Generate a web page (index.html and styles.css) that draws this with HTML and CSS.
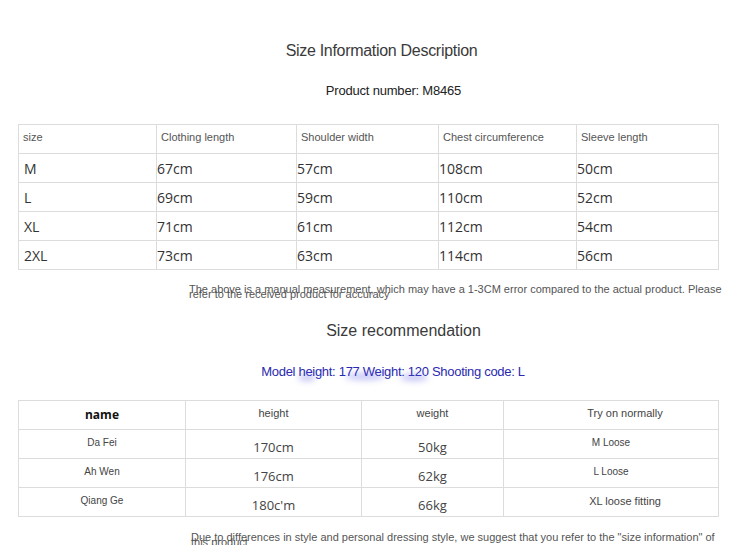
FILE: index.html
```html
<!DOCTYPE html>
<html>
<head>
<meta charset="utf-8">
<link rel="stylesheet" href="styles.css">
</head>
<body>
<div class="page">
  <h1 class="title title-top">Size Information Description</h1>
  <p class="product">Product number: M8465</p>

  <table class="size-table">
    <colgroup>
      <col style="width:138px"><col style="width:140px"><col style="width:142px"><col style="width:138px"><col style="width:142px">
    </colgroup>
    <tr class="head">
      <td>size</td><td>Clothing length</td><td>Shoulder width</td><td>Chest circumference</td><td>Sleeve length</td>
    </tr>
    <tr><td>M</td><td>67cm</td><td>57cm</td><td>108cm</td><td>50cm</td></tr>
    <tr><td>L</td><td>69cm</td><td>59cm</td><td>110cm</td><td>52cm</td></tr>
    <tr><td>XL</td><td>71cm</td><td>61cm</td><td>112cm</td><td>54cm</td></tr>
    <tr><td>2XL</td><td>73cm</td><td>63cm</td><td>114cm</td><td>56cm</td></tr>
  </table>

  <p class="note note-top">The above is a manual measurement, which may have a 1-3CM error compared to the actual product. Please refer to the received product for accuracy</p>

  <h2 class="title title-rec">Size recommendation</h2>
  <p class="model">Model height: 177 Weight: 120 Shooting code: L<span class="smudge s1"></span><span class="smudge s2"></span><span class="smudge s3"></span></p>

  <table class="rec-table">
    <colgroup>
      <col style="width:167px"><col style="width:176px"><col style="width:142px"><col style="width:215px">
    </colgroup>
    <tr class="head">
      <td class="name-head">name</td><td>height</td><td>weight</td><td class="shift">Try on normally</td>
    </tr>
    <tr><td class="lbl">Da Fei</td><td class="val">170cm</td><td class="val">50kg</td><td class="lbl">M Loose</td></tr>
    <tr><td class="lbl">Ah Wen</td><td class="val">176cm</td><td class="val">62kg</td><td class="lbl">L Loose</td></tr>
    <tr><td class="lbl">Qiang Ge</td><td class="val">180c'm</td><td class="val">66kg</td><td class="lbl shift">XL loose fitting</td></tr>
  </table>

  <p class="note note-bottom">Due to differences in style and personal dressing style, we suggest that you refer to the "size information" of this product</p>
</div>
</body>
</html>
```

FILE: styles.css
```css
html, body {
  margin: 0;
  padding: 0;
  background: #ffffff;
}

.page {
  width: 729px;
  font-family: "Liberation Sans", Arial, sans-serif;
  color: #333333;
}

.title {
  margin: 0;
  font-weight: normal;
  text-align: center;
  font-size: 16px;
  line-height: 18px;
  color: #3a3a3a;
  letter-spacing: -0.3px;
}

.title-top {
  padding-top: 42px;
  padding-left: 34px;
}

.product {
  margin: 23px 0 0 0;
  text-align: center;
  font-size: 13px;
  line-height: 16px;
  padding-left: 58px;
  color: #222222;
  letter-spacing: -0.2px;
}

table {
  border-collapse: collapse;
  table-layout: fixed;
  margin-left: 18px;
}

td {
  border: 1px solid #dcdcdc;
  padding: 0;
}

.size-table {
  width: 700px;
  margin-top: 25px;
}

.size-table tr {
  height: 29px;
}

.size-table td {
  font-family: "Open Sans", "Noto Sans", sans-serif;
  font-size: 14px;
  color: #333333;
  padding-left: 0;
  vertical-align: middle;
}

.size-table td:first-child {
  padding-left: 5px;
}

.size-table .head td {
  font-family: "Liberation Sans", Arial, sans-serif;
  font-size: 11px;
  color: #555555;
  vertical-align: top;
  padding-top: 6px;
  padding-left: 4px;
}

.note {
  margin: 0;
  font-size: 11px;
  line-height: 5px;
  color: #555555;
  padding-left: 189px;
  padding-right: 5px;
}

.note-top {
  margin-top: 17px;
}

.title-rec {
  margin-top: 25px;
  padding-left: 78px;
  letter-spacing: 0;
}

.model {
  position: relative;
  margin: 24px 0 0 0;
  text-align: center;
  font-size: 13px;
  line-height: 16px;
  color: #2a2ab0;
  padding-left: 57px;
  letter-spacing: -0.3px;
}

.smudge {
  position: absolute;
  height: 7px;
  border-radius: 50%;
  background: rgba(90, 90, 230, 0.35);
  filter: blur(3px);
}

.s1 { left: 298px; top: 10px; width: 18px; }
.s2 { left: 345px; top: 9px; width: 40px; }
.s3 { left: 400px; top: 10px; width: 28px; }

.rec-table {
  width: 700px;
  margin-top: 20px;
}

.rec-table tr {
  height: 29px;
}

.rec-table td {
  text-align: center;
  vertical-align: top;
  font-size: 10px;
  color: #444444;
}

.rec-table .head td {
  padding-top: 6px;
  font-size: 11px;
}

.rec-table .head td.name-head {
  font-family: "Open Sans", "Noto Sans", sans-serif;
  font-weight: bold;
  font-size: 12px;
  color: #111111;
  padding-top: 5px;
}

.rec-table td.lbl {
  padding-top: 7px;
}

.rec-table td.shift {
  padding-left: 28px;
}

.rec-table tr:last-child td.shift {
  font-size: 11px;
}

.rec-table td.val {
  font-family: "Open Sans", "Noto Sans", sans-serif;
  font-size: 13px;
  padding-top: 8px;
}

.note-bottom {
  margin-top: 18px;
  padding-left: 191px;
}
```
